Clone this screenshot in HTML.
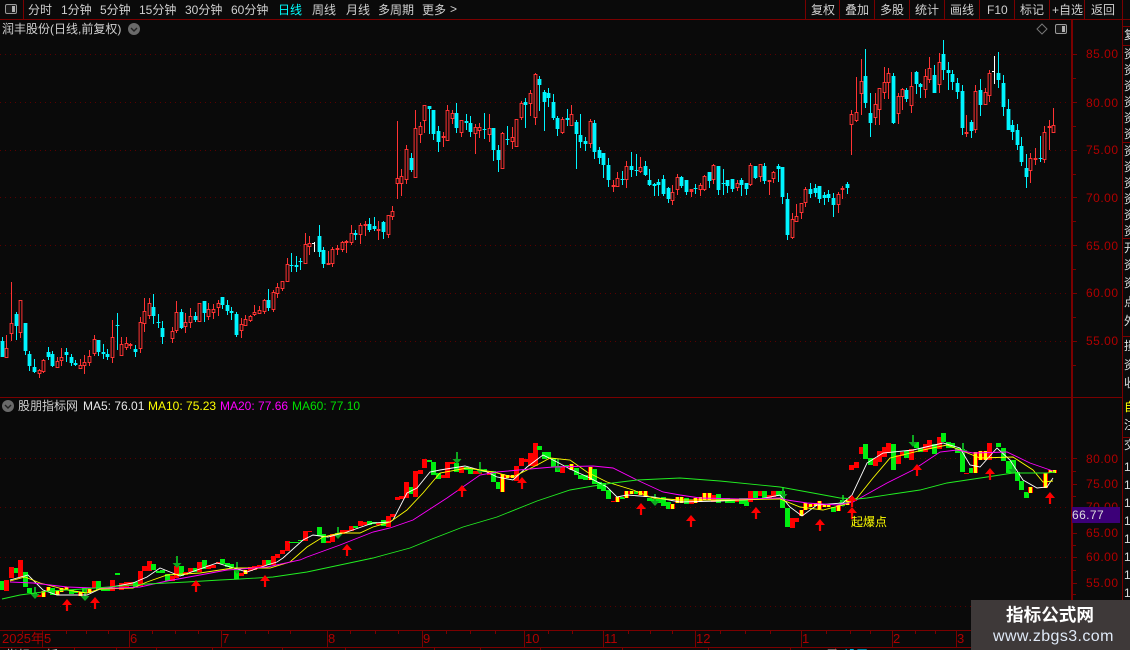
<!DOCTYPE html>
<html><head><meta charset="utf-8">
<style>
html,body{margin:0;padding:0;background:#0a0a0a}
#p{position:relative;width:1130px;height:650px;overflow:hidden;background:#0a0a0a;font-family:"Liberation Sans","WenQuanYi Zen Hei","Noto Sans CJK SC",sans-serif;font-size:12px;color:#d0d0d0}
#p span{position:absolute;white-space:nowrap;line-height:14px}
svg{position:absolute;left:0;top:0}
.a{color:#b00000;letter-spacing:.5px}
.t{color:#b00000;font-size:13px}
.r{color:#ddd}
</style></head><body>
<div id="p">
<svg id="s" width="1130" height="650" xmlns="http://www.w3.org/2000/svg" shape-rendering="crispEdges"></svg>

<span style="left:28px;top:3px">分时</span>
<span style="left:61px;top:3px">1分钟</span>
<span style="left:100px;top:3px">5分钟</span>
<span style="left:139px;top:3px">15分钟</span>
<span style="left:185px;top:3px">30分钟</span>
<span style="left:231px;top:3px">60分钟</span>
<span style="left:278px;top:3px;color:#00ffff">日线</span>
<span style="left:312px;top:3px">周线</span>
<span style="left:346px;top:3px">月线</span>
<span style="left:378px;top:3px">多周期</span>
<span style="left:422px;top:3px">更多</span>
<span style="left:450px;top:2px">&gt;</span>

<span style="left:811px;top:3px">复权</span>
<span style="left:845px;top:3px">叠加</span>
<span style="left:880px;top:3px">多股</span>
<span style="left:915px;top:3px">统计</span>
<span style="left:950px;top:3px">画线</span>
<span style="left:987px;top:3px">F10</span>
<span style="left:1020px;top:3px">标记</span>
<span style="left:1052px;top:3px">+自选</span>
<span style="left:1091px;top:3px">返回</span>

<span style="left:2px;top:22px">润丰股份(日线,前复权)</span>
<span style="left:18px;top:399px">股朋指标网</span>
<span style="left:83px;top:399px;color:#e8e8e8">MA5: 76.01</span>
<span style="left:148px;top:399px;color:#ffff00">MA10: 75.23</span>
<span style="left:220px;top:399px;color:#ff00ff">MA20: 77.66</span>
<span style="left:292px;top:399px;color:#00e000">MA60: 77.10</span>

<span class="a" style="left:1086px;top:47px">85.00</span>
<span class="a" style="left:1086px;top:96px">80.00</span>
<span class="a" style="left:1086px;top:143px">75.00</span>
<span class="a" style="left:1086px;top:191px">70.00</span>
<span class="a" style="left:1086px;top:239px">65.00</span>
<span class="a" style="left:1086px;top:286px">60.00</span>
<span class="a" style="left:1086px;top:334px">55.00</span>

<span class="a" style="left:1086px;top:452px">80.00</span>
<span class="a" style="left:1086px;top:477px">75.00</span>
<span class="a" style="left:1086px;top:500px">70.00</span>
<span style="left:1072px;top:507px;width:48px;height:16px;background:#3c0078;color:#ddd;line-height:16px;letter-spacing:.4px">66.77</span>
<span class="a" style="left:1086px;top:526px">65.00</span>
<span class="a" style="left:1086px;top:550px">60.00</span>
<span class="a" style="left:1086px;top:576px">55.00</span>

<span style="left:851px;top:515px;color:#ffff00">起爆点</span>

<span class="t" style="left:2px;top:632px">2025年</span>
<span class="t" style="left:44px;top:632px">5</span>
<span class="t" style="left:130px;top:632px">6</span>
<span class="t" style="left:222px;top:632px">7</span>
<span class="t" style="left:328px;top:632px">8</span>
<span class="t" style="left:423px;top:632px">9</span>
<span class="t" style="left:525px;top:632px">10</span>
<span class="t" style="left:604px;top:632px">11</span>
<span class="t" style="left:696px;top:632px">12</span>
<span class="t" style="left:802px;top:632px">1</span>
<span class="t" style="left:893px;top:632px">2</span>
<span class="t" style="left:957px;top:632px">3</span>

<span style="left:6px;top:648px">指标</span>
<span style="left:46px;top:648px">板</span>
<span style="left:826px;top:648px">周</span>
<span style="left:844px;top:648px;color:#00cfff">设置</span>

<span class="r" style="left:1124px;top:28px">复</span>
<span class="r" style="left:1124px;top:47px">资</span>
<span class="r" style="left:1124px;top:63px">资</span>
<span class="r" style="left:1124px;top:79px">资</span>
<span class="r" style="left:1124px;top:95px">资</span>
<span class="r" style="left:1124px;top:111px">资</span>
<span class="r" style="left:1124px;top:127px">资</span>
<span class="r" style="left:1124px;top:144px">资</span>
<span class="r" style="left:1124px;top:160px">资</span>
<span class="r" style="left:1124px;top:176px">资</span>
<span class="r" style="left:1124px;top:192px">资</span>
<span class="r" style="left:1124px;top:208px">资</span>
<span class="r" style="left:1124px;top:224px">资</span>
<span class="r" style="left:1124px;top:241px">开</span>
<span class="r" style="left:1124px;top:258px">资</span>
<span class="r" style="left:1124px;top:276px">资</span>
<span class="r" style="left:1124px;top:295px">点</span>
<span class="r" style="left:1124px;top:314px">外</span>
<span class="r" style="left:1124px;top:339px">损</span>
<span class="r" style="left:1124px;top:358px">资</span>
<span class="r" style="left:1124px;top:376px">收</span>
<span style="left:1124px;top:400px;color:#ffff00">自</span>
<span class="r" style="left:1124px;top:418px">注</span>
<span class="r" style="left:1124px;top:438px">交</span>
<span class="r" style="left:1124px;top:460px">1</span>
<span class="r" style="left:1124px;top:478px">1</span>
<span class="r" style="left:1124px;top:496px">1</span>
<span class="r" style="left:1124px;top:514px">1</span>
<span class="r" style="left:1124px;top:532px">1</span>
<span class="r" style="left:1124px;top:550px">1</span>
<span class="r" style="left:1124px;top:568px">1</span>
<span class="r" style="left:1124px;top:586px">1</span>

<div style="position:absolute;left:971px;top:600px;width:159px;height:50px;background:#3e3939"></div>
<span style="left:1006px;top:605px;color:#fff;font-size:17.6px;font-weight:bold;line-height:20px">指标公式网</span>
<span style="left:993px;top:628px;color:#dfe9f7;font-size:16px;line-height:18px;letter-spacing:.4px">www.zbgs3.com</span>
</div>
<script>
var C="2.3 337 341 357 357 c,6.3 335 348 357 358 r,11.3 282 323 333 341 r,16.3 312 314 326 340 c,20.3 300 300 332 338 r,25.3 323 323 351 355 c,29.3 351 354 366 371 c,34.3 359 367 372 373 c,39.3 369 370 373 378 r,43.3 359 360 371 373 r,48.3 347 352 357 360 c,52.3 351 354 366 367 c,57.3 357 361 367 367 r,61.3 348 357 360 366 r,66.3 348 352 355 362 c,71.3 354 357 363 366 c,75.3 360 363 365 366 c,80.3 359 365 368 369 r,84.3 355 362 365 374 r,89.3 350 356 362 366 r,94.3 335 339 353 356 r,98.3 340 340 352 356 c,103.3 344 352 354 359 c,107.3 349 354 357 360 c,112.3 320 337 357 363 r,117.3 313 325 326 350 c,121.3 337 344 355 355 r,126.3 337 343 347 350 r,130.3 343 344 345 349 r,135.3 345 349 352 357 c,140.3 317 322 348 353 r,144.3 298 311 323 332 r,149.3 298 303 315 319 r,153.3 294 307 316 324 c,158.3 314 322 323 328 c,162.3 321 328 337 344 c,172.3 327 331 338 343 r,176.3 301 312 330 333 r,181.3 309 312 328 329 c,185.3 313 322 326 333 r,190.3 308 316 322 328 r,195.3 312 316 320 322 c,199.3 303 303 321 321 r,204.3 301 301 313 322 c,208.3 303 309 316 320 r,213.3 304 309 312 319 r,218.3 300 303 307 316 r,222.3 297 297 305 309 c,227.3 300 305 311 315 c,231.3 307 311 313 320 c,236.3 312 314 335 337 c,241.3 318 324 330 338 r,245.3 315 319 325 326 r,250.3 315 316 320 322 r,254.3 305 312 314 316 r,259.3 306 310 313 313 r,264.3 299 300 311 314 r,268.3 289 300 308 311 c,273.3 290 292 309 312 r,277.3 283 287 293 298 r,282.3 281 281 288 291 r,287.3 258 264 281 281 r,291.3 253 265 266 272 c,296.3 256 265 267 272 c,300.3 258 261 262 270 c,305.3 233 244 263 264 r,309.3 236 243 246 255 r,314.3 242 243 243 252 w,319.3 225 236 252 257 c,323.3 247 250 264 268 c,328.3 251 263 265 265 f,332.3 247 249 263 267 r,337.3 245 248 250 255 f,342.3 241 242 249 252 r,346.3 240 241 243 253 f,351.3 225 233 242 245 r,355.3 230 233 235 240 c,360.3 223 225 234 244 r,365.3 221 224 226 236 f,369.3 218 224 230 232 c,374.3 217 226 229 231 c,378.3 221 229 230 240 f,383.3 221 222 232 239 c,388.3 215 215 234 238 r,392.3 206 211 216 220 r,397.3 121 178 183 199 r,401.3 169 176 183 196 r,406.3 145 149 179 184 r,411.3 153 158 170 172 c,415.3 110 128 177 177 r,420.3 122 126 134 143 r,424.3 105 105 120 133 r,429.3 106 106 109 134 c,433.3 110 110 134 140 c,438.3 126 131 142 152 c,443.3 132 136 138 147 f,447.3 105 110 140 140 r,452.3 110 113 118 124 r,456.3 103 113 128 133 c,461.3 120 120 132 137 r,466.3 114 121 123 130 c,470.3 116 123 132 137 c,475.3 124 127 133 154 r,479.3 123 127 130 138 r,484.3 113 129 130 139 c,489.3 114 128 134 142 r,493.3 128 128 150 161 c,498.3 145 150 160 172 c,502.3 132 133 168 168 r,507.3 126 139 140 145 c,512.3 127 137 141 149 r,516.3 119 119 146 146 r,521.3 101 103 117 120 r,525.3 98 102 105 128 c,530.3 90 93 103 116 r,535.3 73 74 117 125 r,539.3 76 79 85 111 c,544.3 90 92 102 131 c,548.3 88 93 98 107 c,553.3 94 102 118 120 c,557.3 116 118 129 136 c,562.3 117 119 132 134 r,567.3 109 118 120 126 c,571.3 105 114 125 125 r,576.3 120 122 134 169 c,580.3 114 135 142 148 c,585.3 137 141 144 151 c,590.3 119 121 143 148 r,594.3 120 123 152 159 c,599.3 147 150 158 164 c,603.3 153 153 165 178 c,608.3 158 165 180 187 c,613.3 180 185 187 192 f,617.3 172 178 186 186 r,622.3 171 179 180 185 c,626.3 161 166 179 188 r,631.3 152 166 170 177 c,636.3 154 170 171 176 c,640.3 157 167 171 173 r,645.3 161 166 175 176 c,649.3 169 180 185 186 c,654.3 183 184 186 196 c,658.3 179 182 185 196 c,663.3 175 179 194 196 c,668.3 187 188 199 203 c,672.3 185 192 200 205 r,677.3 174 177 189 195 r,681.3 176 177 186 188 c,686.3 180 180 192 195 c,691.3 189 189 192 197 f,695.3 184 188 189 194 c,700.3 183 185 189 196 r,704.3 175 176 189 191 r,709.3 172 172 181 188 c,713.3 164 165 179 184 r,718.3 166 166 190 195 c,723.3 169 183 184 195 c,727.3 180 180 186 193 c,732.3 179 179 189 192 c,737.3 180 183 187 191 r,741.3 178 180 185 196 c,746.3 183 183 189 195 c,750.3 163 165 184 186 r,755.3 166 166 178 179 c,760.3 164 164 176 182 r,764.3 163 166 181 184 c,769.3 180 180 182 195 f,773.3 171 172 178 183 r,778.3 164 166 169 182 c,782.3 167 167 197 204 c,787.3 193 199 235 240 c,792.3 213 219 237 239 r,796.3 204 216 221 222 r,801.3 203 203 212 219 r,805.3 187 189 202 207 r,810.3 183 189 194 198 c,815.3 184 188 193 197 c,819.3 186 186 199 203 c,824.3 192 195 198 205 c,828.3 190 194 198 202 c,833.3 193 198 205 217 c,838.3 192 194 204 213 r,842.3 186 188 190 199 f,847.3 182 184 188 194 c,851.3 110 114 124 155 r,856.3 77 112 120 122 r,861.3 59 81 93 115 r,865.3 49 76 103 108 c,870.3 93 113 123 137 c,875.3 93 104 117 125 r,879.3 88 88 109 125 r,884.3 67 82 92 99 r,888.3 68 73 82 99 r,893.3 73 76 123 124 c,898.3 93 96 113 124 r,902.3 88 89 96 110 r,906.3 88 90 99 102 c,911.3 72 86 105 113 r,916.3 71 72 84 94 c,920.3 83 84 87 98 c,925.3 69 76 89 98 r,929.3 57 68 79 83 r,934.3 65 75 93 93 c,939.3 53 62 84 93 r,943.3 40 54 70 80 c,948.3 62 70 73 90 c,952.3 70 74 82 90 c,957.3 78 83 92 99 c,962.3 85 91 128 135 c,966.3 115 132 134 137 f,971.3 120 122 131 138 c,975.3 85 91 129 133 r,980.3 79 90 105 116 c,985.3 88 92 104 105 r,989.3 70 73 95 102 r,994.3 56 71 72 84 w,998.3 52 73 80 88 c,1003.3 75 83 107 116 c,1008.3 99 109 130 130 c,1012.3 120 125 132 140 c,1017.3 124 130 145 150 c,1021.3 137 146 162 166 c,1026.3 154 168 177 188 c,1030.3 153 158 170 183 r,1035.3 148 158 158 165 f,1040.3 136 158 159 162 c,1044.3 126 132 159 163 r,1049.3 120 126 128 150 f,1053.3 108 125 132 133 r";
var B="2 581 590 g,6 580 591 r,11 567 578 r,16 568 573 g,20 560 577 r,25 572 587 g,29 588 593 g,34 593 595 g,39 595 597 r,43 591 597 y,48 587 591 y,52 588 595 g,57 591 595 y,61 588 592 y,66 587 590 y,71 590 594 g,75 591 593 g,80 592 596 y,84 588 593 g,89 589 593 y,94 581 588 r,98 581 590 g,103 587 591 g,107 587 591 g,112 580 591 r,117 573 575 g,121 583 590 r,126 582 588 r,130 582 586 r,135 582 587 g,140 571 586 r,144 566 571 r,149 561 571 r,153 564 570 g,158 571 573 g,162 570 573 g,167 574 581 g,172 576 581 r,176 566 578 r,181 566 576 g,185 572 575 r,190 568 572 r,195 568 572 g,199 562 572 r,204 560 569 g,208 565 569 r,213 565 568 r,218 562 564 r,222 559 564 g,227 563 567 g,231 564 568 g,236 568 579 g,241 573 576 r,245 570 574 y,250 567 571 r,254 566 570 r,259 565 568 r,264 560 566 r,268 560 565 g,273 556 565 r,277 554 558 r,282 550 554 r,287 541 551 r,291 542 543 g,296 542 543 g,300 540 541 g,305 531 541 r,309 531 532 r,319 527 536 g,323 534 543 g,328 541 543 r,332 534 542 r,337 533 535 g,342 530 534 r,346 530 532 r,351 526 531 r,355 526 528 g,360 521 526 r,365 522 525 r,369 521 525 g,374 522 524 g,378 523 525 r,383 520 526 g,388 516 527 r,392 514 517 r,397 497 500 r,401 496 499 r,406 482 498 r,411 487 494 g,415 471 497 r,420 470 474 r,424 459 468 r,429 460 462 g,433 462 475 g,438 473 479 g,443 475 478 r,447 462 478 r,452 462 464 r,456 463 472 g,461 467 473 r,466 467 470 g,470 469 474 g,475 471 474 r,479 469 474 r,484 469 472 g,489 471 475 r,493 471 482 g,498 482 489 g,502 474 492 y,507 475 478 y,512 475 478 y,516 466 481 r,521 458 466 r,525 459 462 r,530 453 466 r,535 443 466 r,539 446 450 g,544 452 459 g,548 452 458 g,553 458 467 g,557 466 472 g,562 467 473 r,567 465 467 g,571 464 470 y,576 468 475 g,580 475 479 g,585 475 480 g,590 467 480 y,594 469 484 g,599 482 489 g,603 483 491 g,608 490 499 g,613 501 502 r,617 497 502 y,622 497 499 g,626 491 498 y,631 491 494 y,636 491 494 g,640 491 495 y,645 491 497 y,649 498 501 g,654 499 502 g,658 499 503 g,663 497 506 g,668 502 509 g,672 504 509 y,677 497 503 y,681 497 503 y,686 498 504 g,691 500 504 r,695 498 503 y,700 497 502 y,704 493 500 y,709 493 500 y,713 495 502 r,718 494 503 g,723 498 501 g,727 498 503 g,732 499 503 g,737 499 502 r,741 498 504 g,746 498 506 g,750 491 502 r,755 491 498 g,760 491 496 r,764 491 498 g,769 495 498 r,773 491 497 r,778 491 496 g,782 491 508 g,787 508 527 g,792 518 528 r,796 518 522 r,801 510 516 y,805 503 510 y,810 504 507 y,815 503 506 y,819 501 509 y,824 505 507 y,828 505 507 y,833 507 512 g,838 505 511 y,842 500 506 g,847 500 505 y,851 465 470 r,856 462 468 r,861 447 454 r,865 444 459 g,870 458 465 g,875 458 466 r,879 451 462 r,884 447 457 r,888 443 453 r,893 444 470 g,898 455 464 r,902 452 456 r,906 451 458 g,911 449 460 r,916 442 448 g,920 448 452 g,925 444 452 r,929 440 449 r,934 444 454 g,939 437 449 r,943 433 442 g,948 442 448 g,952 443 448 g,957 448 453 g,962 449 472 g,966 473 474 r,971 468 473 g,975 452 473 y,980 451 460 y,985 451 460 y,989 443 460 r,998 443 447 g,1003 448 461 g,1008 461 473 g,1013 460 473 g,1017 472 481 g,1021 481 490 g,1026 492 498 g,1030 487 493 y,1045 473 488 y,1050 470 473 y,1054 470 473 y";
var W="10,580 28,575 43,590 57,595 87,595 100,589 133,583 147,577 160,568 170,572 180,576 217,563 247,572 267,565 277,562 283,558 303,540 313,535 328,537 347,532 373,523 390,522 393,520 407,493 417,488 430,472 440,470 465,466 487,472 497,477 513,480 527,467 543,455 557,462 570,469 590,478 607,487 617,497 627,495 653,497 680,502 720,501 760,499 780,495 790,507 802,516 817,505 843,503 852,495 867,463 883,453 913,450 943,443 960,448 970,465 980,467 997,448 1010,460 1023,480 1037,488 1047,487 1053,478";
var Y="10,581 25,577 40,583 67,590 87,593 100,589 133,588 147,582 167,575 200,573 233,568 270,568 290,562 307,547 323,537 340,533 360,533 373,527 390,522 407,510 423,493 440,473 467,468 493,472 513,477 537,465 550,458 570,460 587,472 607,482 633,490 653,498 680,500 730,500 780,499 800,507 823,510 843,505 857,498 873,478 890,458 923,450 947,445 960,450 980,458 1013,457 1033,470 1043,482 1053,481";
var M="10,582 33,583 67,587 93,588 117,588 140,587 167,581 200,575 227,570 267,567 300,560 307,557 340,545 373,532 390,528 413,520 447,498 480,475 497,472 530,469 553,467 593,466 613,468 637,480 663,492 680,495 700,498 740,499 780,498 787,500 807,503 837,505 853,502 887,483 913,470 940,452 957,450 973,453 1007,452 1030,463 1053,471";
var G="2,599 20,595 50,591 83,589 147,584 187,582 220,580 240,579 273,577 307,572 340,565 373,558 410,548 432,539 463,527 497,517 537,501 570,490 593,486 613,483 637,480 680,478 720,481 780,487 813,493 840,498 857,499 867,498 893,494 920,490 947,483 987,477 1013,473 1047,473 1055,472";
var o=[],i,d;
var DR="#7a0000";
function L(x1,y1,x2,y2,c,w,extra){o.push('<line x1="'+x1+'" y1="'+y1+'" x2="'+x2+'" y2="'+y2+'" stroke="'+c+'" stroke-width="'+(w||1)+'" '+(extra||'')+'/>');}
[54.5,102.5,150.5,197.5,245.5,293.5,341.5,458.5,507.5,557.5,606.5].forEach(function(y){L(0,y,1068,y,"#5a0000",1,'stroke-dasharray="1 4"');});
L(0,19.5,1130,19.5,DR);
L(0,397.5,1122,397.5,DR);
L(0,630.5,1071,630.5,DR);
L(0,647.5,971,647.5,DR);
o.push('<rect x="1071" y="20" width="2" height="610" fill="'+DR+'"/>');
L(1122.5,0,1122.5,650,DR);
L(23.5,0,23.5,19,DR);
[805,839,874,909,944,979,1014,1049,1084].forEach(function(x){L(x+.5,0,x+.5,19,DR);});
[26,45,142,238,336,437].forEach(function(y){L(1122,y+.5,1130,y+.5,DR);});
[54,102,150,197,245,293,341,458,484,507,533,557,583].forEach(function(y){L(1073,y+.5,1077,y+.5,DR);});
[78,126,174,221,269,317,365,471,496,520,545,570,594].forEach(function(y){L(1073,y+.5,1076,y+.5,DR);});
[42,129,221,327,422,524,603,695,801,892,956].forEach(function(x){L(x+.5,630,x+.5,647,DR);});
[22,66,86,108,152,175,198,245,268,290,350,375,398,446,470,495,548,572,628,650,672,720,745,770,826,850,870,915,935].forEach(function(x){L(x+.5,630,x+.5,634,DR);});
[74,116,156,212,282,345,434,480,540,622,708,790,835].forEach(function(x){L(x+.5,647,x+.5,650,DR);});
C.split(",").forEach(function(s){
 d=s.split(" ");var x=Math.floor(+d[0]),cx=x+.5,h=+d[1],t=+d[2],b=+d[3],l=+d[4],k=d[5];
 var col=k=="c"?"#00f5ff":k=="w"?"#ffffff":"#ff3333";
 L(cx,h,cx,l,col);
 if(k=="c")o.push('<rect shape-rendering="auto" x="'+(cx-1.9)+'" y="'+t+'" width="3.8" height="'+Math.max(b-t,1)+'" fill="'+col+'"/>');
 else if(k=="r")o.push('<rect shape-rendering="auto" x="'+(cx-1.4)+'" y="'+(t+.5)+'" width="2.8" height="'+Math.max(b-t,1)+'" fill="#0a0a0a" stroke="'+col+'" stroke-width="1"/>');
 else if(k=="f")o.push('<rect shape-rendering="auto" x="'+(cx-1.9)+'" y="'+t+'" width="3.8" height="'+Math.max(b-t,2)+'" fill="'+col+'"/>');
 else o.push('<rect x="'+(x-2)+'" y="'+t+'" width="2" height="1" fill="'+col+'"/>');
});
B.split(",").forEach(function(s){
 d=s.split(" ");var x=+d[0],t=+d[1],b=+d[2],k=d[3];
 var col=k=="g"?"#00ee11":"#ff0000";
 o.push('<rect x="'+(x-2)+'" y="'+t+'" width="5" height="'+(b-t)+'" fill="'+col+'"/>');
 if(k=="y")o.push('<rect x="'+(x-1)+'" y="'+t+'" width="3" height="'+(b-t)+'" fill="#ffff00"/>');
});
[[35,587],[85,589],[177,556],[237,562],[338,527],[457,452],[480,462],[558,459],[655,494],[783,487],[843,495],[913,435],[963,443],[1013,462]].forEach(function(a){
 var x=a[0],y=a[1];
 o.push('<path shape-rendering="auto" d="M'+(x-.8)+' '+y+'h2v7h3.5l-4.5 5l-4.5-5h3.5z" transform="translate(-.2 0)" fill="#0ca81f"/>');
});
[[W,"#ffffff"],[Y,"#ffff00"],[M,"#ff00ff"],[G,"#22ee22"]].forEach(function(a){
 o.push('<polyline shape-rendering="auto" points="'+a[0]+'" fill="none" stroke="'+a[1]+'" stroke-width=".9"/>');
});
[[67,599],[95,597],[196,580],[265,575],[347,544],[462,485],[522,477],[641,503],[691,515],[756,507],[820,519],[852,495],[852,507],[917,464],[990,468],[1050,492]].forEach(function(a){
 var x=a[0],y=a[1];
 o.push('<path shape-rendering="auto" d="M'+x+' '+y+'l5 6h-3.9v6h-2.2v-6h-3.9z" fill="#ff0000"/>');
});
function box(x,y){
 o.push('<rect shape-rendering="auto" x="'+(x+.5)+'" y="'+(y+.5)+'" width="11" height="9" rx="1.5" fill="#1a1a1a" stroke="#9a9a9a"/><rect x="'+(x+7)+'" y="'+(y+2)+'" width="3" height="6" fill="#b0b0b0"/>');
}
box(5,4);box(1055,24);
o.push('<path shape-rendering="auto" d="M1042 24l5 5l-5 5l-5-5z" fill="none" stroke="#777"/>');
[[134,29],[8,406]].forEach(function(a){
 o.push('<circle shape-rendering="auto" cx="'+a[0]+'" cy="'+a[1]+'" r="6" fill="#6a6a6a"/><path shape-rendering="auto" d="M'+(a[0]-3)+' '+(a[1]-1)+'l3 3l3-3" fill="none" stroke="#222" stroke-width="1.4"/>');
});
document.getElementById("s").innerHTML=o.join("");
</script>
</body></html>
